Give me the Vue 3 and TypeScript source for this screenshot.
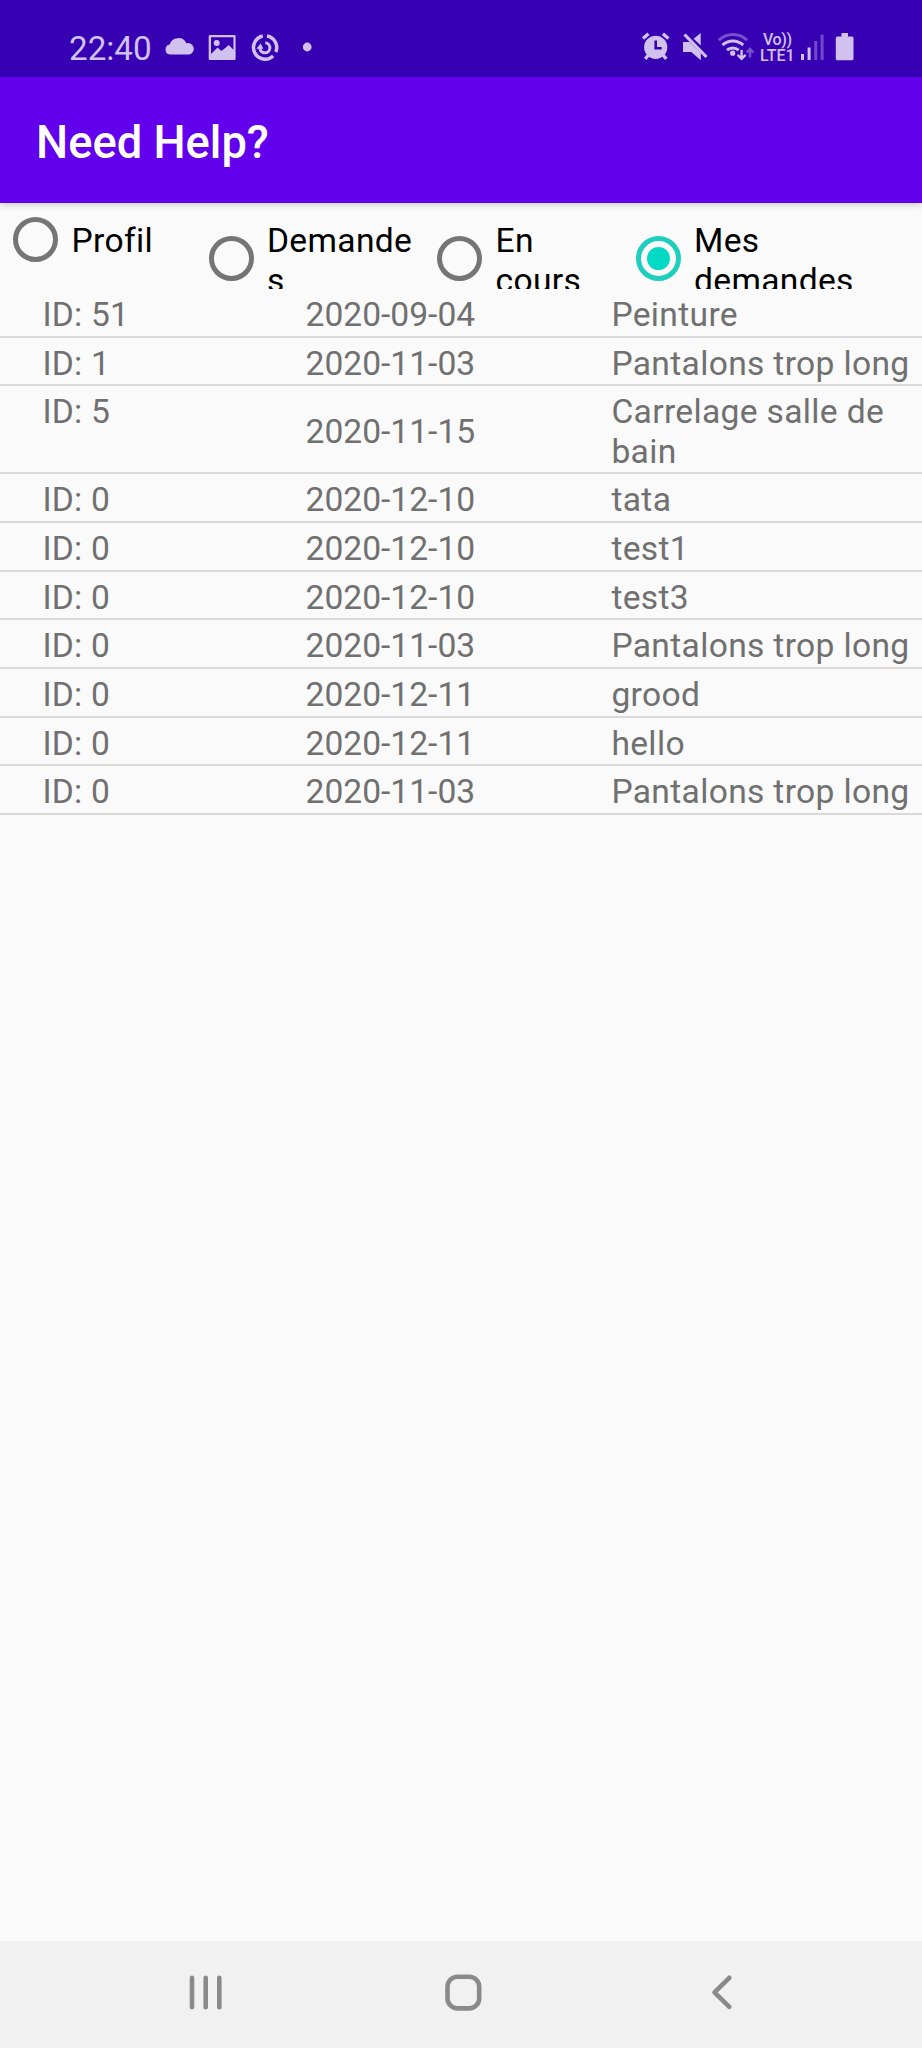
<script setup lang="ts">
import { ref } from 'vue'

interface Tab {
  id: string
  label: string
}

interface Demand {
  id: number
  date: string
  title: string
}

const tabs: Tab[] = [
  { id: 'profil', label: 'Profil' },
  { id: 'demandes', label: 'Demandes' },
  { id: 'encours', label: 'En cours' },
  { id: 'mes', label: 'Mes demandes' },
]

const selected = ref<string>('mes')

const demands: Demand[] = [
  { id: 51, date: '2020-09-04', title: 'Peinture' },
  { id: 1, date: '2020-11-03', title: 'Pantalons trop long' },
  { id: 5, date: '2020-11-15', title: 'Carrelage salle de bain' },
  { id: 0, date: '2020-12-10', title: 'tata' },
  { id: 0, date: '2020-12-10', title: 'test1' },
  { id: 0, date: '2020-12-10', title: 'test3' },
  { id: 0, date: '2020-11-03', title: 'Pantalons trop long' },
  { id: 0, date: '2020-12-11', title: 'grood' },
  { id: 0, date: '2020-12-11', title: 'hello' },
  { id: 0, date: '2020-11-03', title: 'Pantalons trop long' },
]
</script>

<template>
  <div class="screen">
    <header class="status">
      <div class="status-left">
        <span class="clock">22:40</span>
        <svg class="cloud" width="30" height="30" viewBox="165 32 30 30">
          <path d="M170 54.5a5 5 0 0 1-.3-9.9 8.9 8.9 0 0 1 16.6-1.4 5.8 5.8 0 0 1 3.2 11.3z" />
        </svg>
        <svg class="picture" width="28" height="30" viewBox="208 32 28 30">
          <path fill-rule="evenodd" d="M210 35h24.3a1.3 1.3 0 0 1 1.3 1.3v22.4a1.3 1.3 0 0 1-1.3 1.3H210a1.3 1.3 0 0 1-1.3-1.3V36.3a1.3 1.3 0 0 1 1.3-1.3zM211 37.2V54l6.5-6.5 4 3.5 7.3-6 4.6 4.8V37.2z" />
          <circle cx="216.7" cy="43" r="3" />
        </svg>
        <svg class="sync" width="30" height="30" viewBox="250 32 30 30">
          <g fill="none" stroke="currentColor" stroke-width="3.5">
            <path d="M262.8 36A11.700 11.700 0 1 0 273.200 56" />
            <path d="M267 36A11.700 11.700 0 0 1 275.800 52" />
            <path d="M265.300 42.800A5 5 0 1 1 259.900 48.200" stroke-width="3" />
          </g>
          <path d="M256.400 48.800h7l-2.800-5.400z" />
        </svg>
        <svg class="more" width="10" height="30" viewBox="302 32 10 30">
          <circle cx="307.2" cy="47" r="4.4" />
        </svg>
      </div>
      <div class="status-right">
        <svg class="alarm" width="30" height="30" viewBox="641 32 30 30">
          <circle cx="655.7" cy="47.3" r="11.6" />
          <path d="M643 38.500l5.500-4.700M668.400 38.500l-5.500-4.700M648.500 55l-3.300 3.800M663 55l3.300 3.800" fill="none" stroke="currentColor" stroke-width="3.4" />
          <path class="cut" d="M655.700 40.500v7.700h6" />
        </svg>
        <svg class="mute" width="26" height="30" viewBox="682 32 26 30">
          <path d="M683 42h6.500L700.800 53v7.200l-9.500-8.200H683zM693.700 38.800l7-5.800v12.500z" />
          <path d="M684.500 34.500l22 22.500" fill="none" stroke="currentColor" stroke-width="3.2" />
        </svg>
        <svg class="wifi" width="38" height="30" viewBox="717 32 38 30">
          <g fill="none" stroke="currentColor" stroke-width="3">
            <path d="M718.800 40.200a20.500 20.500 0 0 1 28.200 0" opacity=".42" />
            <path d="M722.500 45.200a15 15 0 0 1 20.700 0" />
            <path d="M727 50.200a9 9 0 0 1 11.700 0" />
            <path d="M741.600 50v8.500M737.600 54.800l4 4 4-4" stroke-width="2.4" />
            <path d="M750 57.500V49M746.500 52.500l3.500-3.500 3.500 3.500" stroke-width="2.4" opacity=".42" />
          </g>
          <circle cx="732.7" cy="53.2" r="2.6" />
        </svg>
        <div class="volte"><span class="vo">Vo))</span><span class="lte">LTE1</span></div>
        <svg class="signal" width="24" height="30" viewBox="800 32 24 30">
          <path d="M801 54h3v6h-3zM807.600 47.500h3V60h-3z" />
          <path d="M814.200 41h3v19h-3zM820.600 34.500h3V60h-3z" opacity=".38" />
        </svg>
        <svg class="battery" width="19" height="30" viewBox="835 32 19 30">
          <path d="M841.500 33h6.500v3.500h4a1.500 1.500 0 0 1 1.500 1.500v20.800a1.500 1.500 0 0 1-1.500 1.500h-14.700a1.500 1.500 0 0 1-1.500-1.500V38a1.500 1.500 0 0 1 1.500-1.500h4.200z" />
        </svg>
      </div>
    </header>

    <div class="appbar"><h1>Need Help?</h1></div>

    <main>
      <div class="tabs" role="radiogroup">
        <div
          v-for="tab in tabs"
          :key="tab.id"
          class="tab"
          :class="[tab.id, { on: tab.id === selected }]"
          role="radio"
          :aria-checked="tab.id === selected"
          @click="selected = tab.id"
        >
          <i class="ring"></i>
          <span class="label">{{ tab.label }}</span>
        </div>
      </div>

      <div class="list">
        <div v-for="(demand, i) in demands" :key="i" class="row">
          <span class="id">ID: {{ demand.id }}</span>
          <span class="date">{{ demand.date }}</span>
          <span class="title">{{ demand.title }}</span>
        </div>
      </div>
    </main>

    <nav>
      <svg width="34" height="40" viewBox="0 0 34 40">
        <path d="M3 5.800v29.400M16.700 5.800v29.400M30.300 5.800v29.400" />
      </svg>
      <svg width="40" height="40" viewBox="0 0 40 40">
        <rect x="3.500" y="4.700" width="31.700" height="31.700" rx="10" />
      </svg>
      <svg width="24" height="40" viewBox="0 0 24 40">
        <path d="M19.300 5.800L4.500 20.300l14.800 14.500" />
      </svg>
    </nav>
  </div>
</template>

<style>
body {
  margin: 0;
  background: #fafafa;
}
</style>

<style scoped>
.screen {
  width: 922px;
  height: 2048px;
  display: flex;
  flex-direction: column;
  overflow: hidden;
  background: #fafafa;
  font-family: Roboto, "Liberation Sans", sans-serif;
}
.status {
  height: 77px;
  flex: none;
  display: flex;
  justify-content: space-between;
  box-sizing: border-box;
  padding: 32px 68px 0 69px;
  background: #3700b3;
  color: #d1c1ee;
}
.status svg {
  display: block;
  flex: none;
  fill: currentColor;
}
.status-left,
.status-right {
  display: flex;
  height: 30px;
}
.clock {
  width: 96px;
  font-size: 33.2px;
  line-height: 34px;
}
.picture { margin-left: 13px; }
.sync { margin-left: 14px; }
.more { margin-left: 22px; }
.mute { margin-left: 11px; }
.wifi { margin-left: 9px; }
.status .cut {
  fill: none;
  stroke: #3700b3;
  stroke-width: 2.6;
}
.volte {
  width: 40px;
  margin-left: 5px;
  display: flex;
  flex-direction: column;
  font-weight: 500;
  white-space: nowrap;
}
.vo {
  padding-left: 3px;
  font-size: 16px;
  line-height: 15px;
  letter-spacing: -0.4px;
}
.lte {
  font-size: 16px;
  line-height: 17px;
}
.battery { margin-left: 11px; }
.appbar {
  position: relative;
  height: 126px;
  flex: none;
  display: flex;
  align-items: center;
  padding-left: 36px;
  background: #6200ee;
  box-shadow: 0 2px 7px rgba(0, 0, 0, 0.18);
}
h1 {
  margin: 6px 0 0;
  color: #fff;
  font-size: 45.3px;
  line-height: 56px;
  font-weight: 500;
}
main {
  flex: 1;
  min-height: 0;
}
.tabs {
  height: 86px;
  display: flex;
  overflow: hidden;
}
.tab {
  height: 111px;
  flex: none;
  display: flex;
  align-items: center;
  box-sizing: border-box;
  color: #000;
}
.tab.profil {
  width: 195.5px;
  height: 72px;
}
.tab.demandes { width: 228.5px; }
.tab.encours { width: 198.5px; }
.tab.mes { width: 240px; }
.tab.encours .label { width: 100px; }
.tab.mes .label { width: 180px; }
.ring {
  width: 45px;
  height: 45px;
  flex: none;
  box-sizing: border-box;
  margin-left: 13.3px;
  border: 5px solid #757575;
  border-radius: 50%;
}
.on .ring {
  display: grid;
  place-items: center;
  border-color: #1fcfbe;
}
.on .ring::after {
  content: "";
  width: 23px;
  height: 23px;
  border-radius: 50%;
  background: #03dac5;
}
.label {
  width: 155px;
  margin-top: 4.6px;
  margin-left: 13.2px;
  font-size: 33.6px;
  line-height: 40px;
  letter-spacing: 0.34px;
  overflow-wrap: anywhere;
}
.row {
  display: grid;
  grid-template-columns: 305.6px 305.8px 310.6px;
  box-sizing: border-box;
  padding: 5.9px 0 1.38px;
  border-bottom: 2px solid #d9d9d9;
  color: #707070;
  font-size: 33.6px;
  line-height: 39.4px;
}
.id {
  padding-left: 42.5px;
  letter-spacing: 0.2px;
}
.date { align-self: center; }
.title { letter-spacing: 0.34px; }
nav {
  height: 107px;
  flex: none;
  display: grid;
  grid-template-columns: 189px 34px 221px 40px 226px 24px;
  grid-template-areas: ". a . b . c";
  align-items: center;
  box-sizing: border-box;
  padding-bottom: 5px;
  background: #f1f1f1;
}
nav svg {
  fill: none;
  stroke: #8a8a8a;
  stroke-width: 4.6;
  stroke-linecap: round;
  stroke-linejoin: round;
}
nav svg:nth-child(1) { grid-area: a; }
nav svg:nth-child(2) { grid-area: b; }
nav svg:nth-child(3) { grid-area: c; }
</style>
